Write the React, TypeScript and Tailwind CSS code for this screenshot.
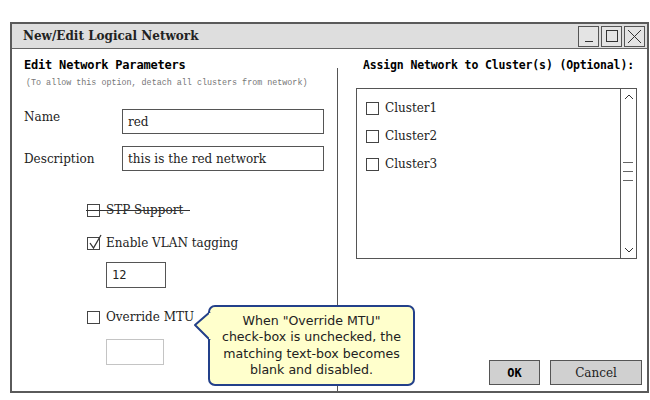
import React from 'react'

const serif = "font-['DejaVu_Serif',serif]"
const mono = "font-['DejaVu_Sans_Mono',monospace]"

function Box({ checked = false }: { checked?: boolean }) {
  return (
    <span className="relative inline-block h-[13px] w-[13px] shrink-0 border border-[#444] bg-white">
      {checked && (
        <svg className="absolute left-0 top-[-4px]" width="15" height="17" viewBox="0 0 15 17">
          <path d="M2 9 L5.5 14 L13 1" fill="none" stroke="#333" strokeWidth="1.3" />
        </svg>
      )}
    </span>
  )
}

function Check({ label, checked, strike }: { label: string; checked?: boolean; strike?: boolean }) {
  return (
    <div className="flex h-[14px] items-center gap-[6px]">
      <Box checked={checked} />
      <span className={`${serif} text-[12px] leading-none text-[#222]`}>{label}</span>
      {strike && <span className="absolute ml-[-1px] h-px w-[104px] bg-[#333]" />}
    </div>
  )
}

function Field({ value, className }: { value?: string; className: string }) {
  return (
    <div className={`flex items-center border border-[#555] bg-white pl-[5px] text-[12px] text-[#222] ${className}`}>
      {value}
    </div>
  )
}

export default function App() {
  return (
    <div className="relative h-[400px] w-[650px] bg-white">
      <div className="absolute left-[10px] top-[22px] flex h-[371px] w-[639px] flex-col border-2 border-[#5a5a5a]">
        <div className="flex h-[25px] items-center justify-between border-b border-[#666] bg-[#dedede] pl-[11px] pr-[2px]">
          <span className={`${serif} text-[12px] font-bold text-[#222]`}>New/Edit Logical Network</span>
          <div className="flex gap-[2px]">
            {['min', 'max', 'close'].map((k) => (
              <div key={k} className="flex h-[21px] w-[21px] items-center justify-center border border-[#555] bg-[#e4e4e4]">
                {k === 'min' && <span className="mt-[10px] h-px w-[8px] bg-[#333]" />}
                {k === 'max' && <span className="h-[12px] w-[12px] border border-[#333]" />}
                {k === 'close' && (
                  <svg width="15" height="15" viewBox="0 0 15 15">
                    <path d="M1 1 L14 14 M14 1 L1 14" stroke="#333" strokeWidth="1" />
                  </svg>
                )}
              </div>
            ))}
          </div>
        </div>

        <div className="flex flex-1">
          <div className="w-[325px] pl-[12px]">
            <div className={`${mono} mt-[9px] text-[12px] font-bold leading-[14px] tracking-[-0.2px] text-black`}>
              Edit Network Parameters
            </div>
            <div className="mt-[6px] pl-[2px] font-['Liberation_Mono',monospace] text-[8.4px] leading-[10px] text-[#777]">
              (To allow this option, detach all clusters from network)
            </div>
            <div className={`${serif} mt-[21px] flex`}>
              <span className="w-[98px] pt-[1px] text-[12px] leading-[14px] text-[#222]">Name</span>
              <Field value="red" className="h-[25px] w-[202px]" />
            </div>
            <div className={`${serif} mt-[12px] flex items-center`}>
              <span className="w-[98px] text-[12px] text-[#222]">Description</span>
              <Field value="this is the red network" className="h-[25px] w-[202px]" />
            </div>
            <div className="ml-[63px] mt-[32px] flex flex-col">
              <div className="relative flex items-center">
                <Check label="STP Support" strike />
              </div>
              <div className="mt-[19px]">
                <Check label="Enable VLAN tagging" checked />
              </div>
              <Field value="12" className={`${mono} ml-[19px] mt-[12px] h-[26px] w-[60px]`} />
              <div className="mt-[22px]">
                <Check label="Override MTU" />
              </div>
              <div className="ml-[19px] mt-[15px] h-[26px] w-[58px] border border-[#c4c4c4] bg-white" />
            </div>
          </div>

          <div className="mt-[19px] w-px bg-[#555]" />

          <div className="flex flex-1 flex-col pl-[25px] pr-[5px]">
            <div className={`${mono} mt-[9px] text-[11.5px] font-bold leading-[14px] tracking-[-0.15px] text-black`}>
              Assign Network to Cluster(s) (Optional):
            </div>
            <div className="ml-[-7px] mt-[16px] flex h-[171px] w-[281px] border border-[#555]">
              <div className="flex flex-1 flex-col gap-[14px] pl-[9px] pt-[12px]">
                {['Cluster1', 'Cluster2', 'Cluster3'].map((c) => (
                  <Check key={c} label={c} />
                ))}
              </div>
              <div className="relative w-[16px] border-l border-[#555]">
                <svg className="absolute left-[3px] top-[4px]" width="10" height="7" viewBox="0 0 10 7">
                  <path d="M1 6 L5 2 L9 6" fill="none" stroke="#333" strokeWidth="1" />
                </svg>
                <div className="absolute left-[2px] top-[73px] flex w-[10px] flex-col gap-[8px]">
                  <span className="h-px bg-[#666]" />
                  <span className="h-px bg-[#666]" />
                  <span className="h-px bg-[#666]" />
                </div>
                <svg className="absolute bottom-[4px] left-[3px]" width="10" height="7" viewBox="0 0 10 7">
                  <path d="M1 1 L5 5 L9 1" fill="none" stroke="#333" strokeWidth="1" />
                </svg>
              </div>
            </div>
            <div className="mb-[6px] mt-auto flex justify-end gap-[10px]">
              <div className={`${mono} flex h-[25px] w-[51px] items-center justify-center border border-[#555] bg-[#d0d0d0] text-[12px] font-bold text-black`}>
                OK
              </div>
              <div className={`${serif} flex h-[25px] w-[92px] items-center justify-center border border-[#555] bg-[#d0d0d0] text-[12px] text-[#222]`}>
                Cancel
              </div>
            </div>
          </div>
        </div>
      </div>

      <div className="absolute left-[208px] top-[305px] flex h-[81px] w-[207px] items-center justify-center rounded-[7px] border-2 border-[#23408a] bg-[#ffffcc]">
        <p className="text-center font-['DejaVu_Sans',sans-serif] text-[12.6px] leading-[16.3px] text-[#222]">
          When "Override MTU"
          <br />
          check-box is unchecked, the
          <br />
          matching text-box becomes
          <br />
          blank and disabled.
        </p>
      </div>
      <svg className="absolute left-[193px] top-[311px]" width="18" height="30" viewBox="0 0 18 30">
        <path d="M17 1 L2 14 L17 29" fill="#ffffcc" stroke="#23408a" strokeWidth="2" strokeLinejoin="round" />
        <rect x="16" y="2" width="3" height="26" fill="#ffffcc" />
      </svg>
    </div>
  )
}
